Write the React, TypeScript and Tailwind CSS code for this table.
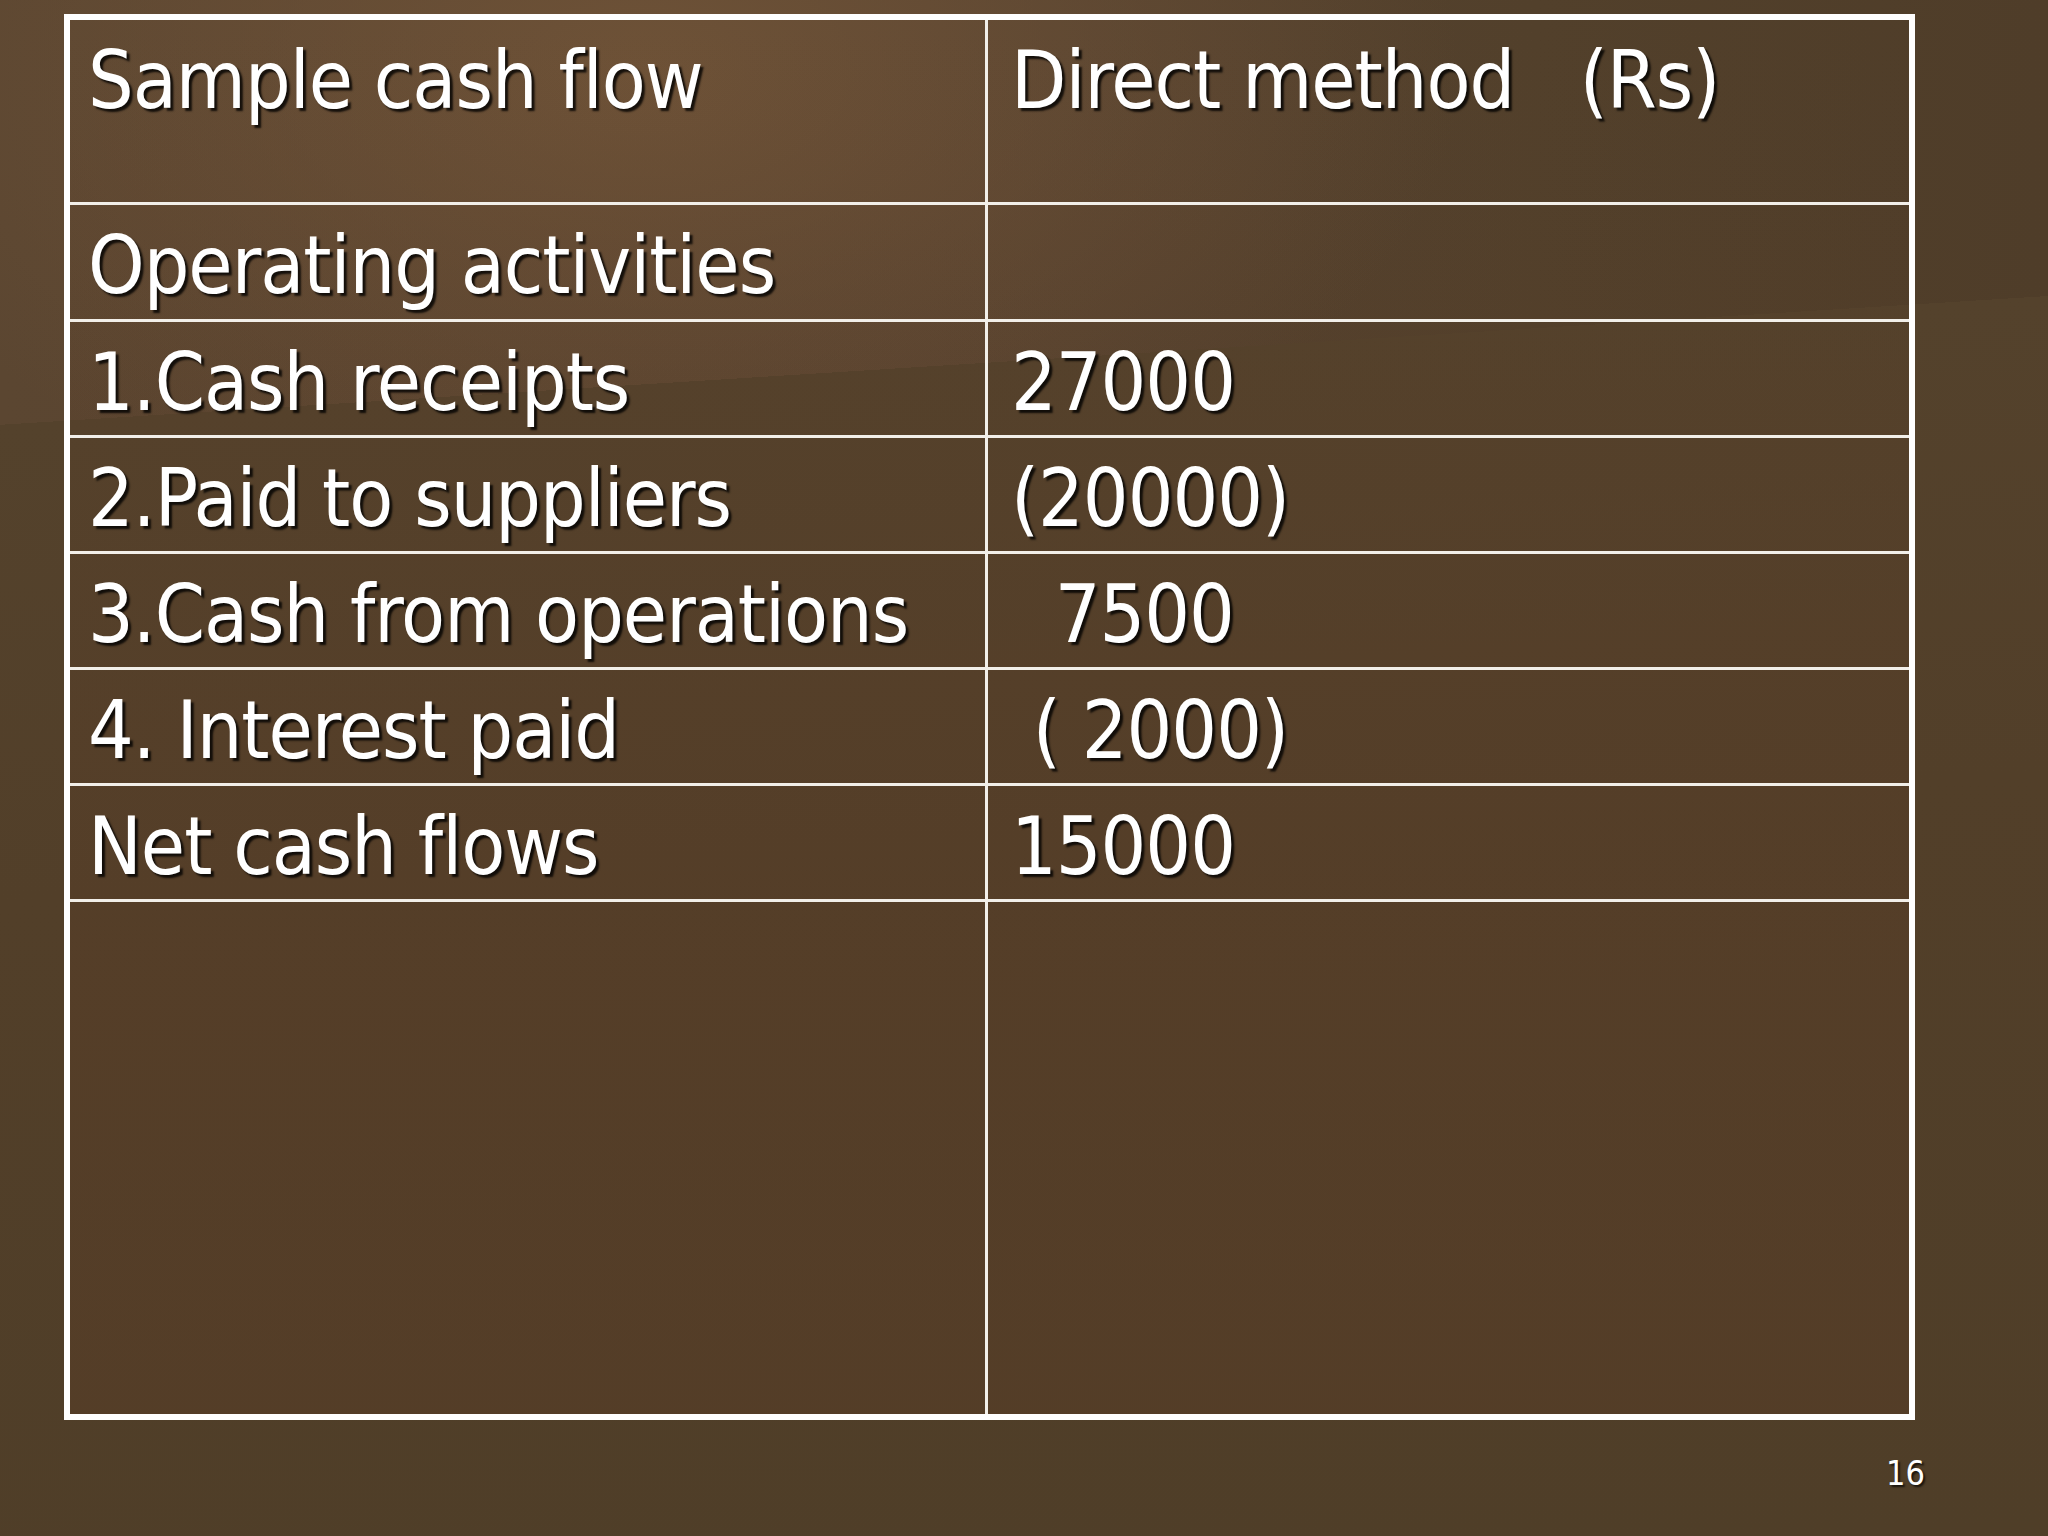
import React from "react";

const rows: { left: string; right: string; h: string }[] = [
  { left: "Sample cash flow", right: "Direct method   (Rs)", h: "h-[185px]" },
  { left: "Operating activities", right: "", h: "h-[117px]" },
  { left: "1.Cash receipts", right: "27000", h: "h-[116px]" },
  { left: "2.Paid to suppliers", right: "(20000)", h: "h-[116px]" },
  { left: "3.Cash from operations", right: "  7500", h: "h-[116px]" },
  { left: "4. Interest paid", right: " ( 2000)", h: "h-[116px]" },
  { left: "Net cash flows", right: "15000", h: "h-[116px]" },
];

const txt =
  "whitespace-pre text-white text-[80px] leading-none tracking-[-1px] [font-family:'DejaVu_Sans_Condensed','DejaVu_Sans',sans-serif] [font-stretch:semi-condensed] [text-shadow:3px_3px_2px_rgba(0,0,0,0.8)]";

export default function App() {
  return (
    <div className="w-[2048px] h-[1536px] overflow-hidden bg-[#52402a] bg-[linear-gradient(176.4deg,transparent_424px,#54422c_424px,#523f29_900px,#4f3e28_100%),radial-gradient(ellipse_820px_480px_at_640px_70px,rgba(110,82,55,1),rgba(110,82,55,0)),linear-gradient(90deg,#5b4631_0%,#564230_45%,#52402b_75%,#4f3d29_100%)]">
      <div className="pt-[14px] pl-[64px]">
        <div className="w-[1851px] h-[1406px] border-[6px] border-white flex flex-col bg-[linear-gradient(180deg,rgba(90,60,38,0)_0%,rgba(90,60,38,0.3)_55%,rgba(90,60,38,0.4)_100%)]">
          {rows.map((r, i) => (
            <div
              key={i}
              className={`${r.h} flex border-b-[3px] border-[#f2efe9]`}
            >
              <div className="w-[918px] border-r-[3px] border-[#f2efe9] pt-[21px] pl-[18px]">
                <div className={txt}>{r.left}</div>
              </div>
              <div className="flex-1 pt-[21px] pl-[23px]">
                <div className={txt}>{r.right}</div>
              </div>
            </div>
          ))}
          <div className="flex-1 flex">
            <div className="w-[918px] border-r-[3px] border-[#f2efe9]" />
            <div className="flex-1" />
          </div>
        </div>
      </div>
      <div className="pt-[36px] pr-[123px] text-right text-white text-[34px] leading-none [font-family:'DejaVu_Sans_Condensed','DejaVu_Sans',sans-serif] [font-stretch:semi-condensed] [text-shadow:2px_2px_2px_rgba(0,0,0,0.7)]">
        16
      </div>
    </div>
  );
}
